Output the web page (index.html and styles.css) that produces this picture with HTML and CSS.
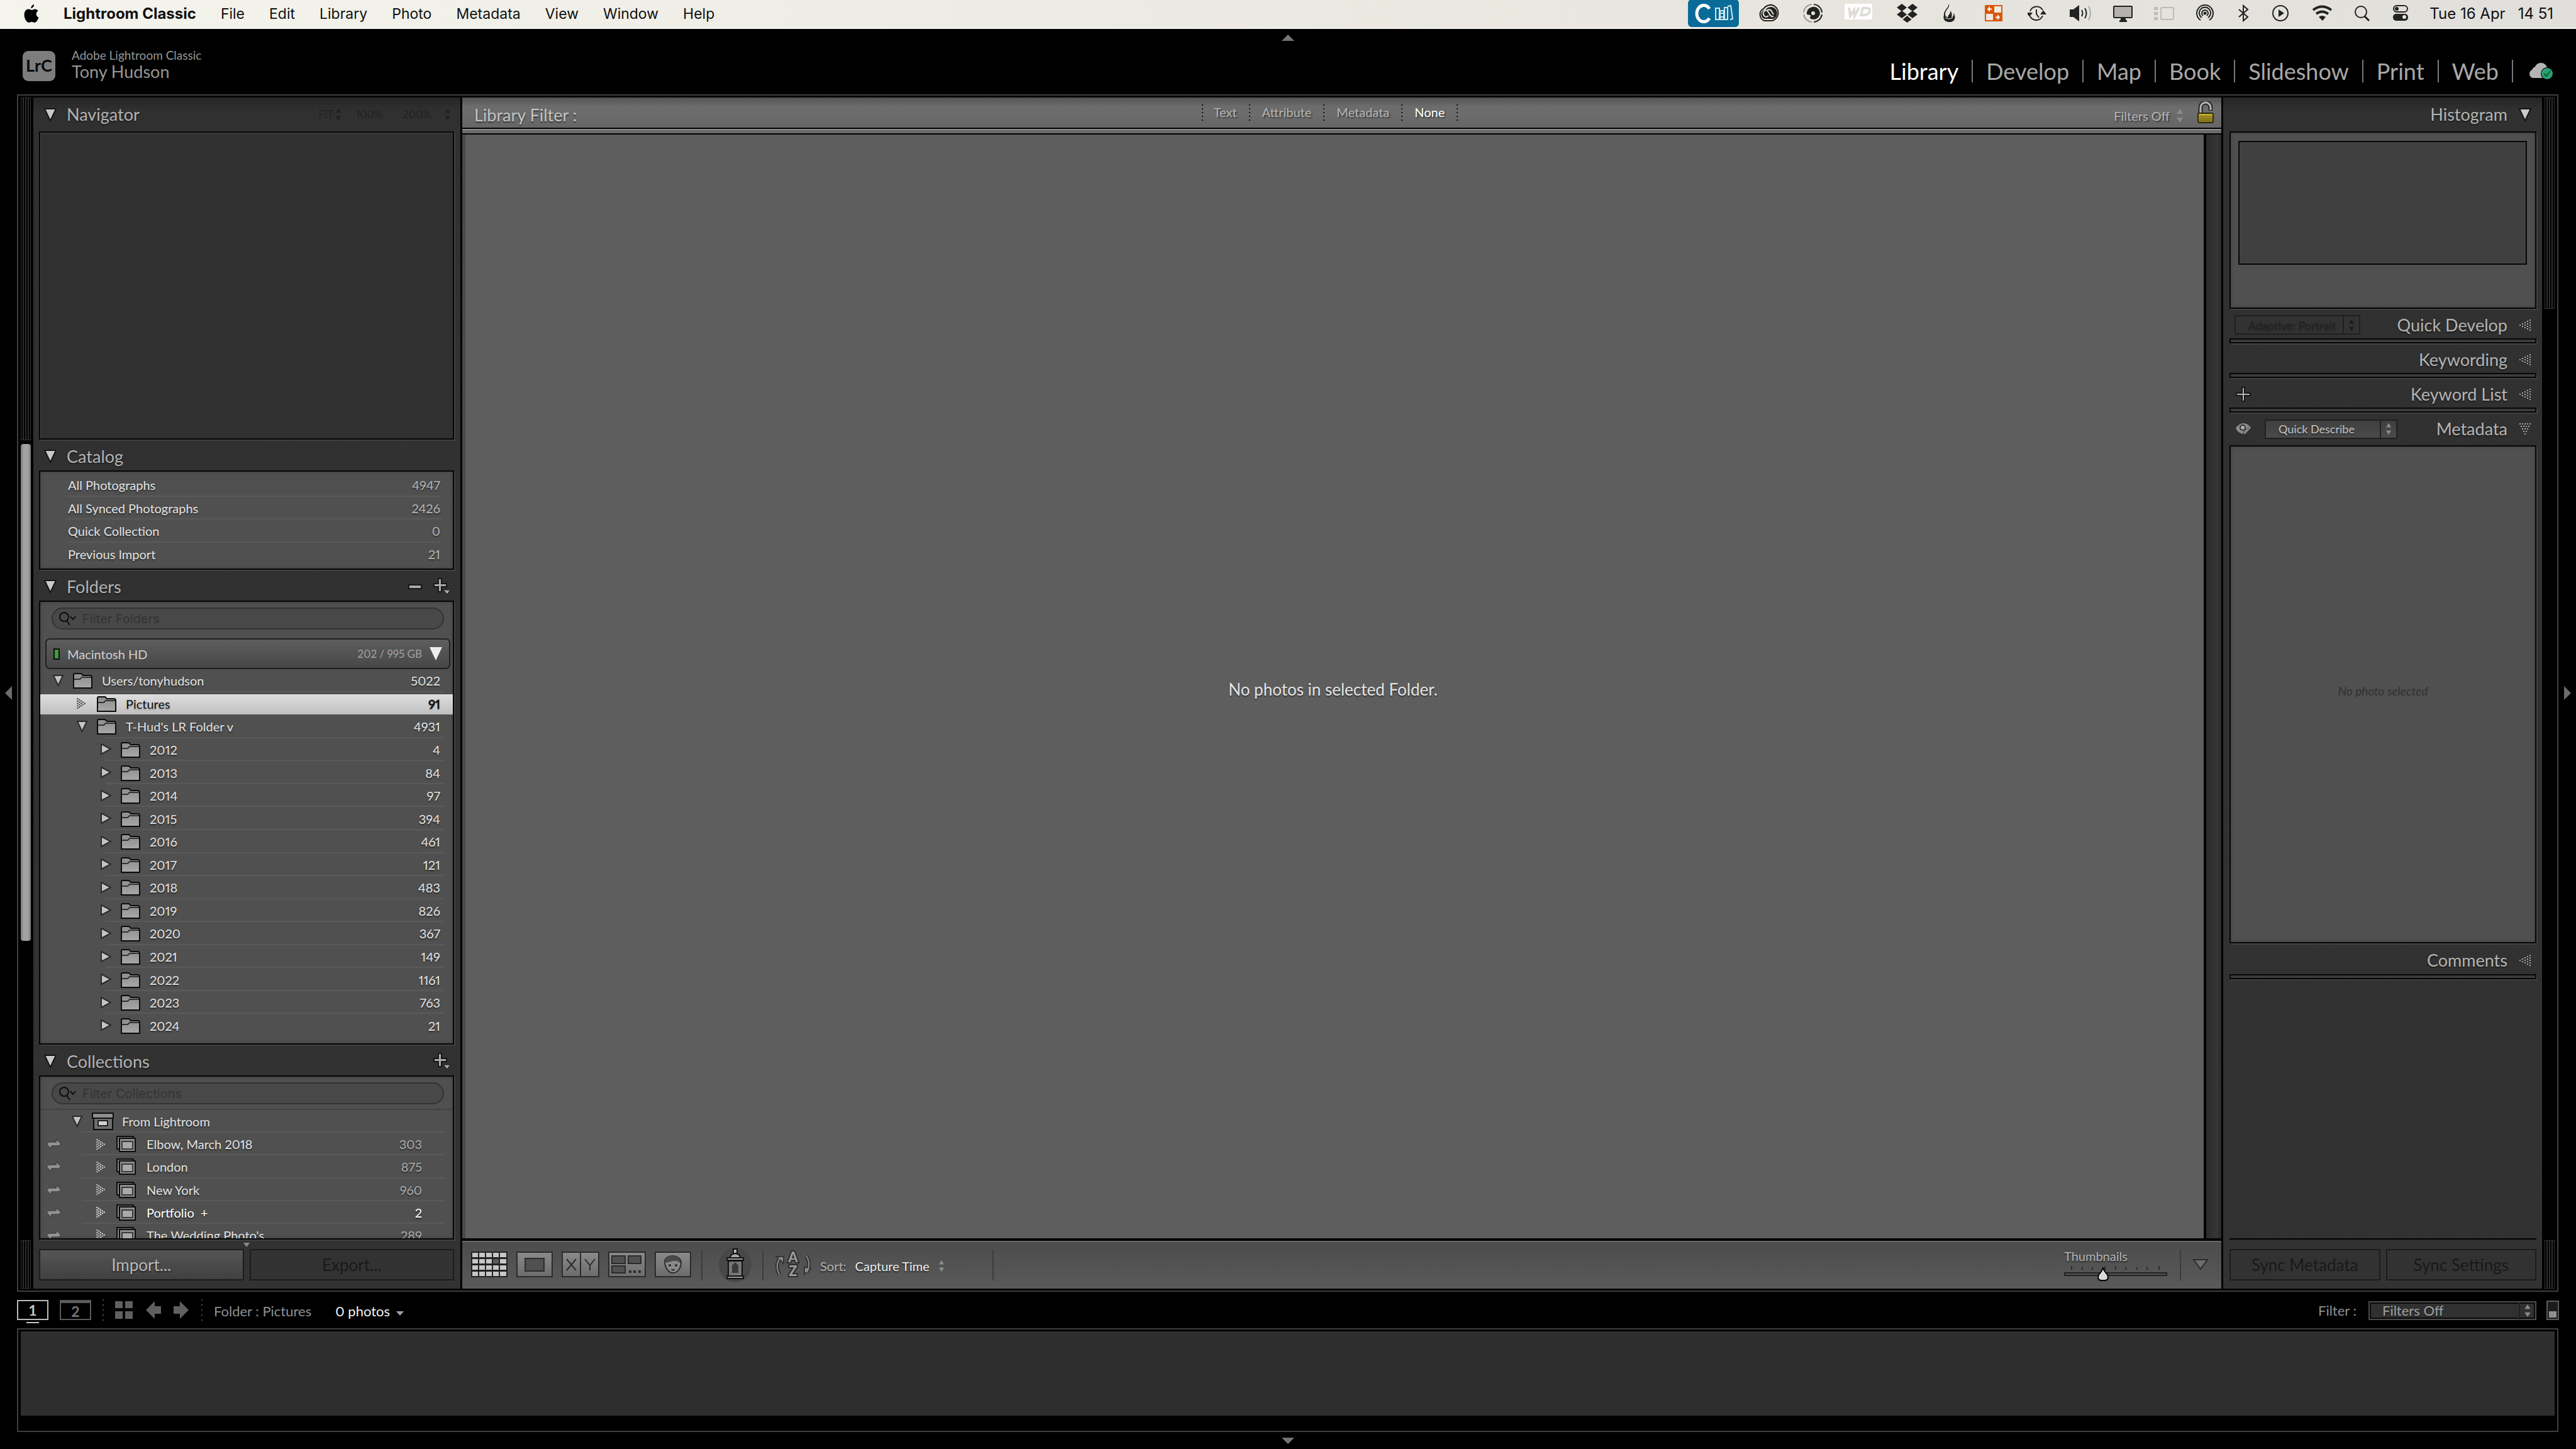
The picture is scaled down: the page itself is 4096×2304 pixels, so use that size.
FILE: index.html
```html
<!DOCTYPE html>
<html lang="en">
<head>
<meta charset="utf-8">
<title>Lightroom Classic</title>
<link rel="stylesheet" href="styles.css">
</head>
<body>
<svg class="defs" aria-hidden="true">
  <defs>
    <linearGradient id="gFolder" x1="0" y1="0" x2="0" y2="1"><stop offset="0" stop-color="#8c8c8c"/><stop offset="1" stop-color="#a8a8a8"/></linearGradient>
    <linearGradient id="gTool" x1="0" y1="0" x2="0" y2="1"><stop offset="0" stop-color="#8a8a8a"/><stop offset="1" stop-color="#6c6c6c"/></linearGradient>
    <linearGradient id="gGold" x1="0" y1="0" x2="0" y2="1"><stop offset="0" stop-color="#c9b53a"/><stop offset="1" stop-color="#857414"/></linearGradient>
    <symbol id="down" viewBox="0 0 20 21"><path d="M1 1h18L10 20z" fill="#c9c9c9" stroke="#141414" stroke-width="2"/></symbol>
    <symbol id="down-sm" viewBox="0 0 18 19"><path d="M1 1h15L8.500 17z" fill="#c4c4c4" stroke="#2a2a2a" stroke-width="2"/></symbol>
    <symbol id="right-sm" viewBox="0 0 18 19"><path d="M1 1v16L16 9z" fill="#c4c4c4" stroke="#2a2a2a" stroke-width="2"/></symbol>
    <symbol id="dots-left" viewBox="0 0 18 20"><path d="M1 9v2M5 7v6M9 5v10M13 3v14M17 1v18" fill="none" stroke="currentColor" stroke-width="2" stroke-dasharray="2 2"/></symbol>
    <symbol id="dots-right" viewBox="0 0 18 20"><path d="M13 9v2M10 7v6M7 5v10M4 3v14M1 1v18" fill="none" stroke="currentColor" stroke-width="2" stroke-dasharray="2 2"/></symbol>
    <symbol id="dots-down" viewBox="0 0 20 18"><path d="M9 17h2M7 13h6M5 9h10M3 5h14M1 1h18" fill="none" stroke="currentColor" stroke-width="2" stroke-dasharray="2 2"/></symbol>
    <symbol id="folder" viewBox="0 0 31 26"><path d="M1 25V4q0-2 2-2h10l3 3h11q3 0 3 3v17z" fill="url(#gFolder)" stroke="#0c0c0c" stroke-width="2"/><path d="M2 11h9l3-3h15" fill="none" stroke="#333" stroke-width="2"/></symbol>
    <symbol id="coll" viewBox="0 0 31 26"><path d="M1 21V1h26v4" fill="#777" stroke="#0c0c0c" stroke-width="2"/><path d="M1 1v20h5M5 4h25v21H5z" fill="#8d8d8d" stroke="#0c0c0c" stroke-width="2"/><path d="M9 9h17v12H9z" fill="#a9a9a9" stroke="#3a3a3a" stroke-width="2"/></symbol>
    <symbol id="sync" viewBox="0 0 26 18"><path d="M1 9l4-3h12V1l8 8-4 3H9v5z" fill="#929292" stroke="#333" stroke-width="1"/></symbol>
    <symbol id="step" viewBox="0 0 12 24"><path d="M6 1l5 8H1zM6 23l5-8H1z" fill="currentColor"/></symbol>
    <symbol id="plusmenu" viewBox="0 0 28 28"><path d="M8 1h5v8h8v5h-8v8H8v-8H1V9h7z" fill="#a9a9a9" stroke="#161616" stroke-width="2"/><path d="M16 19h11l-5 7z" fill="#a9a9a9" stroke="#161616"/></symbol>
    <symbol id="plus" viewBox="0 0 24 24"><path d="M10 1h4v9h9v4h-9v9h-4v-9H1v-4h9z" fill="#b3b3b3" stroke="#161616" stroke-width="2"/></symbol>
    <symbol id="loupe" viewBox="0 0 28 24"><circle cx="9" cy="9" r="7" fill="none" stroke="#0c0c0c" stroke-width="2"/><path d="M13 15l5 7M19 8l4 5 4-5" fill="none" stroke="#0c0c0c" stroke-width="2"/></symbol>
  </defs>
</svg>

<nav class="menubar" aria-label="System menu">
  <a class="apple" href="#" aria-label="Apple"><svg width="24" height="30" viewBox="0 0 24 30"><path d="M16 0c.3 3-2 6-4.600 6.200C11 3.500 13.500.6 16 0zM22.500 10.200c-4.500 2.800-3.300 8.800 1 10.500C22 25 19.500 29 17 29c-2 0-2.600-1.200-4.700-1.200S9.500 29 7.600 29C4.500 29 .5 22.500.5 16.600.5 11 3.800 7.600 7.200 7.600c2.200 0 3.700 1.300 5.200 1.300 1.400 0 3-1.500 5.600-1.500 1.800 0 3.500 1 4.500 2.800z"/></svg></a>
  <a class="app-name" href="#">Lightroom Classic</a>
  <a href="#">File</a><a href="#">Edit</a><a href="#">Library</a><a href="#">Photo</a><a href="#">Metadata</a><a href="#">View</a><a href="#">Window</a><a href="#">Help</a>
  <div class="status">
    <svg width="81" height="46" viewBox="0 0 81 46"><rect width="81" height="44" rx="6" fill="#0b6b98"/><path d="M34 15a11 13 0 1 0 0 15" fill="none" stroke="#fff" stroke-width="5"/><path d="M44 14h6v18h-6zM51 18h6v14h-6zM58 13h5v19h-5zM63 11l5-1 3 21-4 1M52 22h4M52 28h4" fill="none" stroke="#cfe6ef" stroke-width="2"/></svg>
    <svg width="40" height="46" viewBox="0 0 40 46" fill="none" stroke-width="2"><path d="M10 34a9 10 0 0 1-2-19q5-7 14-6a13 13 0 0 1 0 25z" stroke="#222"/><path d="M10 31a6 7 0 0 1 1-14q3-5 10-5a10 10 0 0 1 3 19z" fill="#222"/><path d="M24 27q-4 1-6-3l-3-5q-3-3-6 0-3 5 1 8 3 2 6-1M14 17q5-2 7 2l3 5" stroke="#e5e4de"/></svg>
    <svg width="35" height="46" viewBox="0 0 35 46"><path d="M17 8a14 14 0 0 1 13 13M30 24a14 14 0 0 1-13 12" fill="none" stroke="#222" stroke-width="2"/><path d="M14 8A14 14 0 0 0 1 21M1 24a14 14 0 0 0 13 12" fill="none" stroke="#999" stroke-width="2"/><path d="M15 12a10 10 0 1 1-4 18l1-5-6-1q-1-10 9-12z" fill="#222"/><circle cx="16" cy="22" r="3" fill="#e5e4de"/></svg>
    <svg width="51" height="46" viewBox="0 0 51 46"><rect y="7" width="44" height="25" rx="2" fill="#fff"/><path d="M7 13l2 13 6-9 1 9 7-13M26 25h6q7-1 8-7 0-4-5-4h-6z" fill="none" stroke="#dddcd8" stroke-width="4"/></svg>
    <svg width="44" height="46" viewBox="0 0 44 46" fill="#222"><path d="M9 7l8 6-8 6-8-6zM26 7l8 6-8 6-8-6zM9 18l8 6-8 6-8-6zM26 18l8 6-8 6-8-6zM17.500 26l7 6-7 5-7-5z"/></svg>
    <svg width="35" height="46" viewBox="0 0 35 46"><path d="M9 7c2 6-6 10-6 16 0 3 1 5 4 6 0-4 5-6 4-11 3 3 3 7 2 11 3-1 4-4 3-8 5 8 2 15-6 15S-1 31 1 25C0 18 8 14 9 7z" fill="#222"/><path d="M3 29q6 4 12 0" stroke="#e5e4de" fill="none"/></svg>
    <svg width="37" height="46" viewBox="0 0 37 46"><rect y="9" width="28" height="26" fill="#d9560b"/><path d="M15 11h11v10H15zM2 23h11v10H2z" fill="#efe9df"/><path d="M7 12v7M4 15.500h7M21 25v7M17 28.500h7" stroke="#fff" stroke-width="2"/></svg>
    <svg width="36" height="46" viewBox="0 0 36 46" fill="none" stroke="#222" stroke-width="2"><path d="M4 19a11 11 0 0 1 20-2M24 26a11 11 0 0 1-20 1M14 16v7l4 6"/><path d="M0 22h6l-3 4zM22 23h6l-3-4z" fill="#222"/></svg>
    <svg width="38" height="46" viewBox="0 0 38 46" fill="none" stroke="#222" stroke-width="2"><path d="M1 17h5l8-6v22l-8-6H1z" fill="#222"/><path d="M19 17q3 5 0 10M24 14q5 8 0 16"/><path d="M30 11q6 11 0 22" stroke="#aaa"/></svg>
    <svg width="34" height="46" viewBox="0 0 34 46"><rect x="1" y="11" width="29" height="18" rx="1" fill="#b3b2ae" stroke="#222" stroke-width="2"/><path d="M12 30h8v3h2v3H10v-3h2z" fill="#222"/></svg>
    <svg width="36" height="46" viewBox="0 0 36 46" fill="#bbb"><path d="M0 12h6v5H0zM0 20h6v5H0zM0 28h6v5H0z"/><rect x="11" y="13" width="20" height="19" rx="2" fill="none" stroke="#bbb" stroke-width="2"/></svg>
    <svg width="36" height="46" viewBox="0 0 36 46" fill="none" stroke="#222" stroke-width="2"><path d="M7 33a13 13 0 1 1 14 0M9 29a9 9 0 1 1 10 0M11 26a5 5 0 1 1 6 0"/><circle cx="14" cy="22" r="1.500" fill="#222"/></svg>
    <svg width="23" height="46" viewBox="0 0 23 46" fill="none" stroke="#222" stroke-width="2"><path d="M1 16l14 12-7 6V10l7 6L1 28"/></svg>
    <svg width="33" height="46" viewBox="0 0 33 46"><circle cx="13" cy="22" r="12" fill="none" stroke="#222" stroke-width="2"/><path d="M10 16l9 6-9 6z" fill="#222"/></svg>
    <svg width="36" height="46" viewBox="0 0 36 46" fill="none" stroke="#222" stroke-width="4"><path d="M1 17q14-11 29 0M6 23q9-7 19 0"/><path d="M10 28q5-4 11 0l-5 6z" fill="#222" stroke="none"/></svg>
    <svg width="30" height="46" viewBox="0 0 30 46" fill="none" stroke="#222" stroke-width="2"><circle cx="10" cy="20" r="9"/><path d="M16 27l7 7" stroke-width="3"/></svg>
    <svg width="27" height="46" viewBox="0 0 27 46"><rect x="1" y="10" width="22" height="10" rx="5" fill="none" stroke="#222" stroke-width="2"/><circle cx="6" cy="15" r="3" fill="#222"/><rect y="23" width="24" height="11" rx="5" fill="#222"/><circle cx="18" cy="28" r="3" fill="#e5e4de"/></svg>
    <time class="clock"><span>Tue 16 Apr</span><span>14 51</span></time>
  </div>
</nav>

<header class="identity">
  <span class="lrc">LrC</span>
  <div class="who"><span class="product">Adobe Lightroom Classic</span><span class="user">Tony Hudson</span></div>
  <button class="edge" aria-label="Hide module picker"><svg width="22" height="12" viewBox="0 0 22 12"><path d="M11 1l10 10H1z" fill="#757575"/></svg></button>
  <nav class="modules" aria-label="Modules">
    <a class="on" href="#">Library</a><a href="#">Develop</a><a href="#">Map</a><a href="#">Book</a><a href="#">Slideshow</a><a href="#">Print</a><a href="#">Web</a>
    <svg class="cloud" width="40" height="32" viewBox="0 0 40 32"><path d="M7 27a7 7 0 0 1-1-13 8 8 0 0 1 5-5 10 10 0 0 1 19 2l3 4-7 12z" fill="#b4b4b4"/><circle cx="30" cy="20" r="10" fill="#000"/><circle cx="30" cy="20" r="9" fill="#2d9d78"/><path d="M25 20l4 4 6-8" fill="none" stroke="#061" stroke-width="2"/></svg>
  </nav>
</header>

<div class="stage">
  <button class="side" aria-label="Hide left panel"><svg width="12" height="22" viewBox="0 0 12 22"><path d="M11 0v22L0 11z" fill="#6b6b6b"/></svg></button>
  <main class="frame">
    <div class="track"><i class="grip nav-grip"></i><i class="thumb"></i><i class="space"></i><i class="grip"></i></div>

    <aside class="panel">
      <header class="head first"><svg class="tri" width="20" height="21"><use href="#down"/></svg><h2>Navigator</h2>
        <div class="zoomers"><button>FIT<svg width="10" height="22"><use href="#step"/></svg></button><button>100%</button><button>200%</button><button aria-label="More zoom levels"><svg width="10" height="22"><use href="#step"/></svg></button></div></header>
      <div class="box preview"></div>

      <header class="head"><svg class="tri" width="20" height="21"><use href="#down"/></svg><h2>Catalog</h2></header>
      <ul class="box catalog">
        <li><span>All Photographs</span><b>4947</b></li>
        <li><span>All Synced Photographs</span><b>2426</b></li>
        <li><span>Quick Collection</span><b>0</b></li>
        <li><span>Previous Import</span><b>21</b></li>
      </ul>

      <header class="head"><svg class="tri" width="20" height="21"><use href="#down"/></svg><h2>Folders</h2>
        <div class="acts"><button aria-label="Remove folder"><svg width="22" height="10" viewBox="0 0 22 10"><path d="M1 2h20v6H1z" fill="#a9a9a9" stroke="#161616" stroke-width="2"/></svg></button><button aria-label="Add folder"><svg width="28" height="28"><use href="#plusmenu"/></svg></button></div></header>
      <div class="box">
        <label class="search"><svg width="28" height="24"><use href="#loupe"/></svg><input type="text" placeholder="Filter Folders" aria-label="Filter Folders"></label>
        <div class="volume"><i class="led"></i><span>Macintosh HD</span><small>202 / 995 GB</small><svg width="20" height="21" viewBox="0 0 20 21"><path d="M0 0h20L10 21z" fill="#ececec"/></svg></div>
        <ul class="tree folders">
          <li class="l0"><svg class="tw"><use href="#down-sm"/></svg><svg class="ic"><use href="#folder"/></svg><span>Users/tonyhudson</span><b>5022</b></li>
          <li class="l1 picked"><svg class="tw"><use href="#dots-right"/></svg><svg class="ic"><use href="#folder"/></svg><span>Pictures</span><b>91</b></li>
          <li class="l1 open"><svg class="tw"><use href="#down-sm"/></svg><svg class="ic"><use href="#folder"/></svg><span>T-Hud's LR Folder v</span><b>4931</b></li>
          <li class="l2"><svg class="tw"><use href="#right-sm"/></svg><svg class="ic"><use href="#folder"/></svg><span>2012</span><b>4</b></li>
          <li class="l2"><svg class="tw"><use href="#right-sm"/></svg><svg class="ic"><use href="#folder"/></svg><span>2013</span><b>84</b></li>
          <li class="l2"><svg class="tw"><use href="#right-sm"/></svg><svg class="ic"><use href="#folder"/></svg><span>2014</span><b>97</b></li>
          <li class="l2"><svg class="tw"><use href="#right-sm"/></svg><svg class="ic"><use href="#folder"/></svg><span>2015</span><b>394</b></li>
          <li class="l2"><svg class="tw"><use href="#right-sm"/></svg><svg class="ic"><use href="#folder"/></svg><span>2016</span><b>461</b></li>
          <li class="l2"><svg class="tw"><use href="#right-sm"/></svg><svg class="ic"><use href="#folder"/></svg><span>2017</span><b>121</b></li>
          <li class="l2"><svg class="tw"><use href="#right-sm"/></svg><svg class="ic"><use href="#folder"/></svg><span>2018</span><b>483</b></li>
          <li class="l2"><svg class="tw"><use href="#right-sm"/></svg><svg class="ic"><use href="#folder"/></svg><span>2019</span><b>826</b></li>
          <li class="l2"><svg class="tw"><use href="#right-sm"/></svg><svg class="ic"><use href="#folder"/></svg><span>2020</span><b>367</b></li>
          <li class="l2"><svg class="tw"><use href="#right-sm"/></svg><svg class="ic"><use href="#folder"/></svg><span>2021</span><b>149</b></li>
          <li class="l2"><svg class="tw"><use href="#right-sm"/></svg><svg class="ic"><use href="#folder"/></svg><span>2022</span><b>1161</b></li>
          <li class="l2"><svg class="tw"><use href="#right-sm"/></svg><svg class="ic"><use href="#folder"/></svg><span>2023</span><b>763</b></li>
          <li class="l2 last"><svg class="tw"><use href="#right-sm"/></svg><svg class="ic"><use href="#folder"/></svg><span>2024</span><b>21</b></li>
        </ul>
      </div>

      <header class="head"><svg class="tri" width="20" height="21"><use href="#down"/></svg><h2>Collections</h2>
        <div class="acts"><button aria-label="Add collection"><svg width="28" height="28"><use href="#plusmenu"/></svg></button></div></header>
      <div class="box fill">
        <label class="search"><svg width="28" height="24"><use href="#loupe"/></svg><input type="text" placeholder="Filter Collections" aria-label="Filter Collections"></label>
        <ul class="tree colls">
          <li class="set"><svg class="tw"><use href="#down-sm"/></svg><svg class="ic" viewBox="0 0 35 28"><path d="M3 8h30v19H3z" fill="#6e6e6e" stroke="#0c0c0c" stroke-width="2"/><path d="M1 1h33v8H1z" fill="#8d8d8d" stroke="#0c0c0c" stroke-width="2"/><path d="M10 13h15v8H10z" fill="#d0d0d0" stroke="#222" stroke-width="2"/></svg><span>From Lightroom</span></li>
          <li><svg class="sy"><use href="#sync"/></svg><svg class="tw"><use href="#dots-right"/></svg><svg class="ic"><use href="#coll"/></svg><span>Elbow, March 2018</span><b>303</b></li>
          <li><svg class="sy"><use href="#sync"/></svg><svg class="tw"><use href="#dots-right"/></svg><svg class="ic"><use href="#coll"/></svg><span>London</span><b>875</b></li>
          <li><svg class="sy"><use href="#sync"/></svg><svg class="tw"><use href="#dots-right"/></svg><svg class="ic"><use href="#coll"/></svg><span>New York</span><b>960</b></li>
          <li class="target"><svg class="sy"><use href="#sync"/></svg><svg class="tw"><use href="#dots-right"/></svg><svg class="ic"><use href="#coll"/></svg><span>Portfolio&nbsp; +</span><b>2</b></li>
          <li><svg class="sy"><use href="#sync"/></svg><svg class="tw"><use href="#dots-right"/></svg><svg class="ic"><use href="#coll"/></svg><span>The Wedding Photo's</span><b>289</b></li>
        </ul>
      </div>
      <footer class="foot"><svg class="nub" width="10" height="7" viewBox="0 0 10 7"><path d="M0 0h10L5 7z" fill="#8b8b8b"/></svg><button class="push live">Import...</button><button class="push" disabled>Export...</button></footer>
    </aside>

    <section class="center">
      <div class="filterbar">
        <h2>Library Filter :</h2>
        <div class="filters"><button>Text</button><button>Attribute</button><button>Metadata</button><button class="on">None</button></div>
        <button class="preset">Filters Off<svg width="12" height="24"><use href="#step"/></svg></button>
        <button class="lock" aria-label="Lock filters"><svg width="26" height="36" viewBox="0 0 26 36"><path d="M5 19V10a8 8 0 0 1 16 0v5" fill="none" stroke="#2a2a2a" stroke-width="7"/><path d="M5 18V10a8 8 0 0 1 16 0v4" fill="none" stroke="#b5b5b5" stroke-width="3"/><rect x="1" y="19" width="24" height="15" rx="2" fill="url(#gGold)" stroke="#2c2812" stroke-width="2"/><path d="M3 24h20M3 27h20M3 30h20" stroke="#6c5d10"/></svg></button>
      </div>
      <div class="strip"></div>
      <div class="view"><div class="canvas"><p>No photos in selected Folder.</p></div><div class="gutter"></div></div>
      <div class="toolbar">
        <div class="views">
          <button aria-label="Grid view"><svg width="58" height="42" viewBox="0 0 58 42"><path d="M0 0h58v41H0z" fill="#222"/><path d="M2 2h9v7H2zM13 2h9v7h-9zM24 2h9v7h-9zM35 2h9v7h-9zM46 2h10v7H46zM2 12h9v7H2zM13 12h9v7h-9zM24 12h9v7h-9zM46 12h10v7H46zM2 22h9v7H2zM13 22h9v7h-9zM24 22h9v7h-9zM35 22h9v7h-9zM46 22h10v7H46zM2 32h9v7H2zM13 32h9v7h-9zM24 32h9v7h-9zM35 32h9v7h-9zM46 32h10v7H46z" fill="#c6c6c6"/><path d="M35 12h9v7h-9z" fill="#5b5b5b"/></svg></button>
          <button aria-label="Loupe view"><svg width="58" height="42" viewBox="0 0 58 42"><path d="M1 1h56v39H1z" fill="url(#gTool)" stroke="#2b2b2b" stroke-width="2"/><path d="M14 11h30v20H14z" fill="#505050" stroke="#2b2b2b" stroke-width="2"/></svg></button>
          <button aria-label="Compare view"><svg width="60" height="42" viewBox="0 0 60 42"><path d="M1 1h58v39H1zM30 1v39" fill="url(#gTool)" stroke="#2b2b2b" stroke-width="2"/><path d="M8 12l15 18M23 12L8 30M37 12l8 10v8M53 12l-8 10" fill="none" stroke="#2b2b2b" stroke-width="2"/></svg></button>
          <button aria-label="Survey view"><svg width="60" height="42" viewBox="0 0 60 42"><path d="M1 1h58v39H1z" fill="url(#gTool)" stroke="#2b2b2b" stroke-width="2"/><path d="M6 7h21v12H6zM32 7h20v12H32zM6 23h21v11H6z" fill="#505050" stroke="#2b2b2b" stroke-width="2"/><path d="M33 30h4v4h-4zM40 30h4v4h-4zM48 30h4v4h-4z" fill="#2b2b2b"/></svg></button>
          <button aria-label="People view"><svg width="58" height="42" viewBox="0 0 58 42"><path d="M1 1h56v39H1z" fill="url(#gTool)" stroke="#2b2b2b" stroke-width="2"/><path d="M16 15c1-5 7-8 13-8s12 4 13 10c0 10-6 17-13 17S16 26 16 15z" fill="#8a8a8a" stroke="#2b2b2b" stroke-width="2"/><path d="M16 17c6 2 8-2 15-2 4 0 7 0 10 4 0-8-6-12-12-12S17 9 16 17z" fill="#4a4a4a"/><circle cx="24" cy="22" r="2" fill="#2b2b2b"/><circle cx="34" cy="22" r="2" fill="#2b2b2b"/><path d="M25 28h8l-4 3z" fill="#2b2b2b"/></svg></button>
        </div>
        <i class="rule"></i>
        <button class="spray" aria-label="Painter"><svg width="54" height="56" viewBox="0 0 54 56"><ellipse cx="27" cy="28" rx="26" ry="28" fill="#484848"/><path d="M24 3h6v7h-6z" fill="#bbb" stroke="#111" stroke-width="2"/><path d="M19 17q0-6 8-7 8 1 8 7z" fill="#aaa" stroke="#111" stroke-width="2"/><path d="M16 22h22v24H16z" fill="#777" stroke="#111" stroke-width="2"/><path d="M14 17h26v4H14zM14 46h26v4H14z" fill="#999" stroke="#111" stroke-width="2"/><path d="M22 41V29l5-5 5 5v12z" fill="#3b3b3b"/></svg></button>
        <i class="rule"></i>
        <button class="az" aria-label="Sort direction"><svg width="58" height="56" viewBox="0 0 58 56"><path d="M7 43Q0 30 8 17M50 14q8 12 1 26" fill="none" stroke="#333" stroke-width="6"/><path d="M3 15h11v11zM57 35L47 43V31z" fill="#8b8b8b" stroke="#333" stroke-width="2"/><path d="M7 43Q0 30 8 17M50 14q8 12 1 26" fill="none" stroke="#8b8b8b" stroke-width="2"/><g font-family="Lato, sans-serif" font-weight="900" font-size="22" text-anchor="middle" fill="#9a9a9a" stroke="#2b2b2b" stroke-width="4" paint-order="stroke"><text x="29" y="24">A</text><text x="29" y="46">Z</text></g></svg></button>
        <button class="sort"><span>Sort:</span><strong>Capture Time</strong><svg width="10" height="20"><use href="#step"/></svg></button>
        <i class="rule"></i>
        <label class="size"><span>Thumbnails</span><svg width="164" height="6" viewBox="0 0 164 6"><path d="M12 0v6M29 2v4M45 2v4M65 0v6M82 0v6M98 2v4M116 2v4M132 2v4M151 0v6" stroke="#2b2b2b" stroke-width="2"/></svg><input type="range" min="0" max="100" value="36"></label>
        <i class="rule"></i>
        <button class="more" aria-label="Toolbar options"><svg width="26" height="18" viewBox="0 0 26 18"><path d="M2 1h22L13 16z" fill="#6c6c6c" stroke="#2b2b2b" stroke-width="2"/></svg></button>
      </div>
    </section>

    <aside class="panel right">
      <header class="head first"><h2>Histogram</h2><svg class="tri" width="20" height="21"><use href="#down"/></svg></header>
      <div class="box histo"><div class="graph"></div></div>
      <header class="head shut"><label class="pick dim"><select aria-label="Saved preset" disabled><option>Adaptive: Portrait</option></select><svg width="12" height="20"><use href="#step"/></svg></label><h2>Quick Develop</h2><svg class="tri" width="20" height="20"><use href="#dots-left"/></svg></header>
      <div class="box shutbar"></div>
      <header class="head shut"><h2>Keywording</h2><svg class="tri" width="20" height="20"><use href="#dots-left"/></svg></header>
      <div class="box shutbar"></div>
      <header class="head shut"><button class="lead" aria-label="Add keyword"><svg width="24" height="24"><use href="#plus"/></svg></button><h2>Keyword List</h2><svg class="tri" width="20" height="20"><use href="#dots-left"/></svg></header>
      <div class="box shutbar"></div>
      <header class="head meta"><button class="lead" aria-label="Customize metadata"><svg width="24" height="20" viewBox="0 0 24 20"><path d="M0 9q5-8 12-8t12 7l-9 10q-11 0-15-9z" fill="#8b8b8b"/><circle cx="11" cy="8" r="5" fill="#303030"/><circle cx="11" cy="8" r="3" fill="#b0b0b0"/><path d="M12 19l1-5 8-7" fill="none" stroke="#303030" stroke-width="1"/></svg></button><label class="pick"><select aria-label="Metadata view"><option>Quick Describe</option></select><svg width="12" height="20"><use href="#step"/></svg></label><h2>Metadata</h2><svg class="tri" width="20" height="20"><use href="#dots-down"/></svg></header>
      <div class="box metabox"><em>No photo selected</em></div>
      <header class="head"><h2>Comments</h2><svg class="tri" width="20" height="20"><use href="#dots-left"/></svg></header>
      <div class="box shutbar"></div>
      <div class="rest"></div>
      <footer class="foot"><button class="push" disabled>Sync Metadata</button><button class="push" disabled>Sync Settings</button></footer>
    </aside>
    <div class="track"><i class="grip hist-grip"></i><i class="space"></i><i class="grip"></i></div>
  </main>
  <button class="side" aria-label="Hide right panel"><svg width="12" height="22" viewBox="0 0 12 22"><path d="M1 0v22l11-11z" fill="#6b6b6b"/></svg></button>
</div>

<div class="filmbar">
  <button class="win cur" aria-label="Main window"><span>1</span></button>
  <button class="win" aria-label="Second window"><span>2</span></button>
  <i class="dots"></i>
  <button class="fgrid" aria-label="Grid"><svg width="28" height="28" viewBox="0 0 28 28"><path d="M0 0h12v11H0zM16 0h12v11H16zM0 16h12v12H0zM16 16h12v12H16z" fill="#606060"/></svg></button>
  <button aria-label="Back"><svg width="24" height="28" viewBox="0 0 24 28"><path d="M0 14L14 0v8h10v12H14v8z" fill="#606060"/></svg></button>
  <button class="fwd" aria-label="Forward"><svg width="24" height="28" viewBox="0 0 24 28"><path d="M24 14L10 0v8H0v12h10v8z" fill="#606060"/></svg></button>
  <i class="dots"></i>
  <span class="src">Folder : Pictures</span>
  <button class="count">0 photos<svg width="12" height="8" viewBox="0 0 12 8"><path d="M0 0h12L6 7z" fill="#a0a0a0"/></svg></button>
  <label class="ffilter"><span>Filter :</span><span class="pick film"><select><option>Filters Off</option></select><svg width="12" height="22"><use href="#step"/></svg></span></label>
  <button class="switch" aria-label="Toggle filters"><i></i></button>
</div>
<div class="filmstrip"><div></div></div>
<footer class="bottom"><button class="edge" aria-label="Hide filmstrip"><svg width="22" height="12" viewBox="0 0 22 12"><path d="M1 1h20L11 11z" fill="#757575"/></svg></button></footer>
</body>
</html>
```

FILE: styles.css
```css
* { box-sizing: border-box; }
html, body { height: 100%; }
body {
  margin: 0;
  display: flex;
  flex-direction: column;
  background: #000;
  color: #b3b3b3;
  font: 20px/24px Lato, "Noto Sans", sans-serif;
  font-variant-numeric: proportional-nums;
  overflow: hidden;
}
button, input, select { font: inherit; color: inherit; background: none; border: 0; padding: 0; margin: 0; }
button { display: flex; align-items: center; }
a { color: inherit; text-decoration: none; }
h2, p, ul { margin: 0; padding: 0; font-weight: 400; }
ul { list-style: none; }
b { font-weight: 400; }
svg { display: block; flex: none; }
.defs { position: absolute; width: 0; height: 0; }

/* system menu bar */
.menubar {
  display: flex;
  align-items: center;
  gap: 39px;
  height: 46px;
  flex: none;
  padding: 0 36px 0 38px;
  background: linear-gradient(90deg, #f4f4ed, #e9e7df 60%, #e0dfdb);
  border-bottom: 2px solid #f5f5f2;
  color: #111;
  font: 23px/44px Inter, "Noto Sans", sans-serif;
}
.app-name { font-weight: 700; font-size: 24px; }
.status { display: flex; align-items: center; gap: 31px; margin-left: auto; height: 46px; }
.clock { display: flex; gap: 20px; font-size: 24px; }

/* identity plate and module picker */
.identity { display: grid; grid-template-columns: auto 1fr auto 1fr; align-items: center; height: 104px; flex: none; padding: 14px 36px 0; position: relative; }
.lrc { width: 52px; height: 48px; border-radius: 9px; background: #7d7d7d; color: #0a0a0a; font: 700 27px/46px Lato, sans-serif; text-align: center; }
.who { display: flex; flex-direction: column; padding: 0 0 6px 26px; color: #969696; }
.product { font-size: 19px; line-height: 24px; }
.user { font-size: 27px; line-height: 28px; }
.edge { position: absolute; left: 50%; margin-left: -11px; top: 8px; }
.modules { display: flex; align-items: center; grid-column: 4; justify-self: end; font-size: 36px; line-height: 36px; padding-top: 16px; white-space: nowrap; }
.modules a { padding: 0 21px; border-right: 2px solid #777; color: #a8a8a8; }
.modules a.on { color: #fff; }
.cloud { margin-left: 24px; }

/* main frame */
.stage { flex: 1; min-height: 0; display: grid; grid-template-columns: 27px 1fr 28px; }
.side { justify-content: center; }
.frame {
  display: grid;
  grid-template-columns: 16px 686px minmax(0, 1fr) 514px 16px;
  min-height: 0;
  border: 2px solid #3f3f3f;
  padding: 3px 4px;
}
.track { display: flex; flex-direction: column; min-height: 0; }
.grip { height: 77px; border: 1px solid #333; background: repeating-linear-gradient(90deg, #000 0 2px, #2e2e2e 2px 4px); }
.nav-grip { height: 545px; }
.hist-grip { height: 336px; }
.thumb { height: 790px; margin-top: 6px; border-radius: 4px; background: linear-gradient(90deg, #7b7b7b, #a2a2a2 30%, #a2a2a2 70%, #7b7b7b); }
.space { flex: 1; }

.panel { display: flex; flex-direction: column; min-height: 0; min-width: 0; margin: 0 3px 0 4px; padding: 0 10px 0 9px; background: linear-gradient(#262626, #303030 20px, #323232); }
.head { display: flex; align-items: center; height: 49px; flex: none; padding: 4px 5px 0 8px; }
.head h2, .filterbar h2 { font-size: 27px; line-height: 32px; text-shadow: 0 2px 2px #1c1c1c; }
.head h2 { padding-left: 16px; }
.head.first { height: 54px; padding-top: 0; }
.acts, .zoomers { display: flex; align-items: center; gap: 18px; margin-left: auto; }
.zoomers { gap: 32px; color: #202024; font-size: 17px; }
.zoomers svg { margin-left: 2px; }
.zoomers button:last-child { margin-left: -13px; }
.zoomers button:first-child { margin-right: -9px; }
.box { border: 2px solid #060606; background: #505050; box-shadow: 2px 2px 0 #414141, inset 0 0 5px #3c3c3c; }
.preview { height: 490px; flex: none; background: #303030; box-shadow: 2px 2px 0 #414141, inset 1px 1px 1px #4a4a4a; }
.fill { flex: 1; min-height: 0; overflow: hidden; }

.catalog { display: grid; grid-auto-rows: 1fr; height: 158px; flex: none; padding: 3px 0 5px; }
.catalog li, .tree li { display: flex; align-items: center; color: #e2e2e2; text-shadow: 0 2px 2px #2b2b2b; }
.catalog li { padding: 0 20px 0 44px; background: linear-gradient(#5a5a5a, #5a5a5a) 42px 100% / 596px 2px no-repeat; }
.catalog li:last-child, .tree li.last { background: none; }
.catalog b, .tree b { margin-left: auto; }
.catalog b { color: #b4b4b4; }

.search { display: flex; align-items: center; gap: 10px; height: 35px; margin: 9px 14px 7px 18px; padding: 0 12px 0 9px; border: 2px solid #333; border-radius: 18px; background: #484848; }
.search input { flex: 1; min-width: 0; outline: 0; font: 20px/24px Inter, sans-serif; }
.search input::placeholder { color: #333; opacity: 1; }
.volume { display: flex; align-items: center; height: 49px; margin: 14px 4px 0 8px; padding: 0 11px 0 11px; border: 2px solid #202020; border-radius: 7px; background: linear-gradient(#5e5e5e, #474747); color: #cfcfcf; }
.volume small { margin-left: auto; margin-right: 12px; font-size: 17px; color: #a2a2a2; }
.led { width: 10px; height: 18px; margin-right: 12px; border: 2px solid #0d0d0d; background: #3c9f3c; }

.tree { display: grid; grid-auto-rows: 1fr; }
.folders { height: 585px; margin-bottom: 10px; }
.colls { height: 219px; border-top: 2px solid #434343; }
.tree li { background: linear-gradient(#5a5a5a, #5a5a5a) var(--from, 66px) 100% / calc(100% - var(--from, 66px) - 14px) 2px no-repeat; padding-right: 20px; }
.tree .tw { width: 18px; height: 19px; margin-right: 14px; }
.tree .ic { width: 31px; height: 26px; margin-right: 15px; }
.l0 { padding-left: 20px; }
.l1 { padding-left: 58px; }
.l2 { padding-left: 96px; }
.tree .open, .tree .l2 { --from: 104px; }
.tree .picked { background: linear-gradient(#dedede, #bfbfbf) 0 3px / 100% 32px no-repeat; color: #111; text-shadow: 0 2px 2px #999; }
.picked .tw { color: #222; }
.tree .picked b { -webkit-text-stroke: 1px #111; }
.colls li { padding: 0 49px 0 9px; }
.colls .set { padding-left: 50px; }
.colls .set .ic { width: 35px; height: 28px; margin-right: 13px; }
.colls .sy { width: 25px; height: 18px; margin-right: 55px; }
.colls .ic { margin-right: 17px; }
.colls b { color: #aaa; }
.colls .target, .colls .target b { color: #fff; }

.foot { display: flex; gap: 9px; height: 78px; flex: none; padding-top: 15px; position: relative; }
.nub { position: absolute; left: 325px; top: 5px; }
.push { flex: 1; height: 50px; justify-content: center; border: 2px solid #1c1c1c; background: #323232; color: #191919; font-size: 26px; }
.push.live { background: linear-gradient(#555, #404040); color: #b8b8b8; text-shadow: 0 2px 2px #222; }

/* centre */
.center { display: flex; flex-direction: column; min-width: 0; background: #5e5e5e; box-shadow: inset 5px 0 0 #4a4a4a; }
.filterbar { display: grid; grid-template-columns: 1fr auto 1fr 38px; align-items: center; height: 48px; background: linear-gradient(#525252, #6c6c6c 14px, #6d6d6d 50%, #656565); }
.filterbar h2 { padding: 8px 0 0 19px; color: #c4c4c4; text-shadow: 0 2px 2px #333; }
.filters { display: flex; }
.filters button, .preset { color: #b4b4b4; text-shadow: 2px 2px 2px #3c3c3c; }
.filters button { height: 26px; padding: 0 21px 2px 19px; background: repeating-linear-gradient(#111 0 2px, transparent 2px 6px) 100% 0 / 2px 100% no-repeat; }
.filters button:first-child { background: repeating-linear-gradient(#111 0 2px, transparent 2px 6px) 100% 0 / 2px 100% no-repeat, repeating-linear-gradient(#111 0 2px, transparent 2px 6px) 0 0 / 2px 100% no-repeat; }
.filters .on { color: #fff; }
.preset { justify-self: end; gap: 10px; padding: 10px 22px 0 0; }
.preset svg { color: #8b8b8b; }
.strip { height: 11px; flex: none; border: solid #000; border-width: 2px 0; background: linear-gradient(#8d8d8d 2px, #6a6a6a 2px); }
.view { flex: 1; display: flex; }
.canvas { flex: 1; display: flex; align-items: center; justify-content: center; padding-top: 8px; color: #e3e3e3; font-size: 26px; line-height: 32px; text-shadow: 0 2px 2px #333; }
.gutter { width: 28px; border-left: 4px solid #000; background: linear-gradient(90deg, #2b2b2b, #363636 70%, #2a2a2a); }
.toolbar { display: flex; align-items: center; height: 80px; flex: none; border-top: 4px solid #000; padding-left: 14px; background: linear-gradient(#6a6a6a 2px, #4c4c4c 2px, #5a5a5a); }
.views { display: flex; gap: 14px; }
.rule { width: 2px; height: 49px; background: #3c3c3c; margin: 0 17px 0 16px; }
.spray { margin: 0 0 0 8px; }
.spray + .rule { margin-right: 18px; }
.sort { flex: none; gap: 14px; margin: 4px 60px 0 14px; text-shadow: 0 2px 2px #222; }
.sort strong { font-weight: 400; color: #ececec; }
.sort svg { color: #8b8b8b; }
.size { display: flex; flex-direction: column; margin-left: auto; width: 164px; text-shadow: 0 2px 2px #222; }
.size svg { margin-top: 4px; }
.size input { appearance: none; width: 164px; height: 22px; outline: 0; background: linear-gradient(#555, #555) 2px 10px / 160px 2px no-repeat, linear-gradient(#222, #222) 0 8px / 164px 6px no-repeat; margin-top: -4px; }
.size input::-webkit-slider-thumb { appearance: none; width: 20px; height: 22px; background: url("data:image/svg+xml,%3Csvg xmlns='http://www.w3.org/2000/svg' viewBox='0 0 20 22'%3E%3Cpath d='M10 1q2 6 7 11q3 8-4 9H7q-7-1-4-9 5-5 7-11z' fill='%23d8d8d8' stroke='%23000' stroke-width='2'/%3E%3C/svg%3E") no-repeat; }
.size + .rule { margin: 0 18px 0 20px; }
.more { margin-right: 20px; }

/* right panel */
.right { margin: 0 4px 0 3px; padding: 0 9px 0 10px; }
.right .head { justify-content: flex-end; padding-left: 8px; padding-right: 8px; }
.right .head h2 { padding: 0 18px 0 0; margin-left: auto; }
.right .shut { height: 47px; }
.right .meta { height: 52px; padding-top: 0; }
.right .tri { color: #a8a8a8; }
.histo { height: 282px; flex: none; padding: 13px 13px 0 12px; }
.graph { height: 197px; border: 2px solid #080808; background: #404040; }
.shutbar { height: 8px; flex: none; background: #3c3c3c; }
.lead { width: 48px; padding-left: 2px; }
.metabox { height: 792px; flex: none; display: flex; align-items: center; justify-content: center; padding: 0 0 10px; color: #303030; font-size: 19px; }
.rest { flex: 1; border-bottom: 2px solid #000; }
.pick { display: flex; align-items: center; width: 211px; height: 31px; border: 2px solid #202020; background: linear-gradient(#404040, #4a4a4a); color: #c4c4c4; font-size: 18px; }
.pick select { appearance: none; flex: 1; min-width: 0; height: 27px; padding-left: 20px; border-right: 2px solid #202020; outline: 0; opacity: 1; text-shadow: 0 2px 2px #222; }
.pick svg { margin: 0 6px; color: #8b8b8b; }
.dim { width: 200px; background: #323232; color: #222; }
.dim svg { color: #1c1c1c; }

/* filmstrip bar */
.filmbar { display: flex; align-items: center; height: 58px; flex: none; padding: 0 27px 0 27px; font-size: 22px; color: #8f8f8f; }
.win { position: relative; width: 50px; height: 32px; margin-right: 18px; border: 2px solid #5a5a5a; border-top-width: 5px; justify-content: center; color: #777; font: 700 23px/24px Lato, sans-serif; }
.win.cur { border: 2px solid #b9b9b9; color: #c4c4c4; }
.win.cur::after { content: ""; position: absolute; left: 13px; bottom: -7px; width: 20px; height: 2px; background: #c4c4c4; }
.dots { width: 2px; height: 34px; background: repeating-linear-gradient(#4c4c4c 0 2px, transparent 2px 8px); }
.fgrid { margin: 0 21px 0 18px; }
.fwd { margin: 0 20px; }
.src { margin: 4px 38px 0 18px; }
.count { margin-top: 4px; gap: 10px; color: #f2f2f2; }
.count svg { margin-top: 8px; }
.ffilter { display: flex; align-items: center; gap: 19px; margin-left: auto; padding-top: 2px; }
.film { width: 267px; height: 30px; border-color: #4c4c4c; background: #303030; box-shadow: inset 0 0 0 2px #0a0a0a; color: #a0a0a0; font-size: 22px; }
.switch { align-items: flex-end; width: 20px; height: 31px; margin-left: 16px; padding: 2px; border: 2px solid #5a5a5a; background: #1c1c1c; }
.switch i { width: 100%; height: 10px; background: #8f8f8f; }
.filmstrip { display: flex; height: 165px; flex: none; margin: 0 28px 0 27px; border: 2px solid #3f3f3f; padding: 3px 4px 24px; }
.filmstrip div { flex: 1; background: #2e2e2e; }
.bottom { height: 27px; flex: none; position: relative; }
```
